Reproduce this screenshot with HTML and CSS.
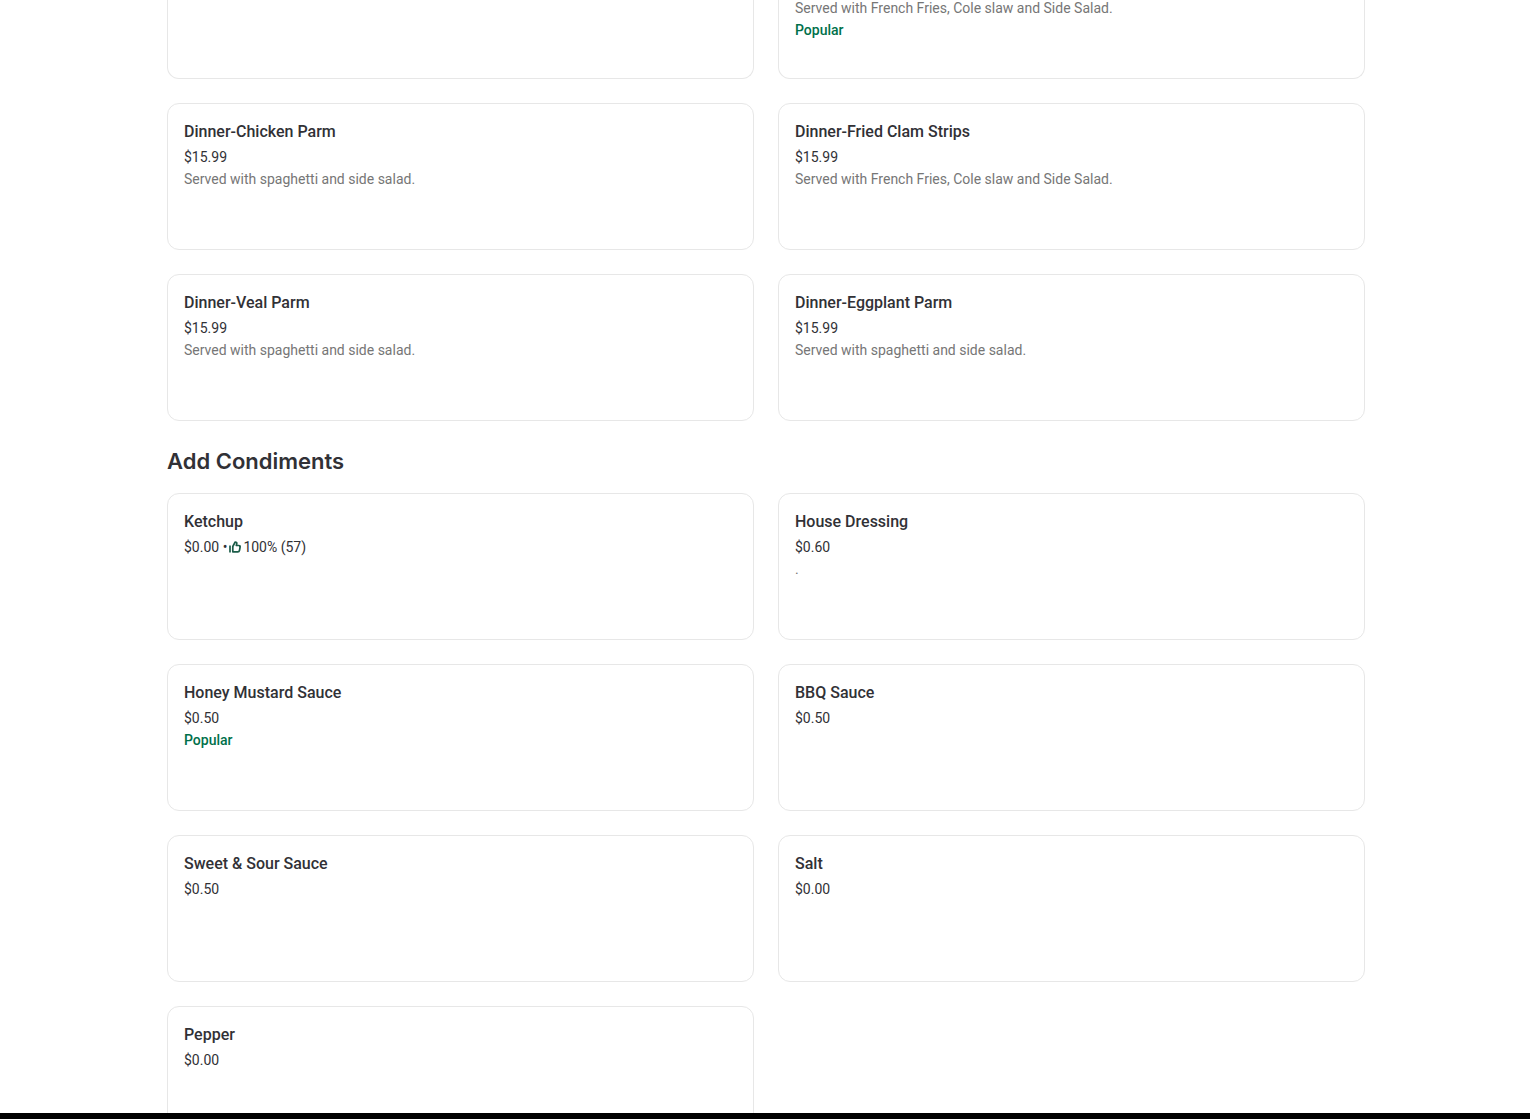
FILE: index.html
```html
<!DOCTYPE html>
<html lang="en">
<head>
<meta charset="utf-8">
<title>Menu</title>
<link rel="stylesheet" href="styles.css">
</head>
<body>
<main class="menu">
  <section class="items">
    <article class="card card-cut"></article>
    <article class="card card-cut">
      <p class="description">Served with French Fries, Cole slaw and Side Salad.</p>
      <p class="popular">Popular</p>
    </article>
    <article class="card">
      <h3 class="name">Dinner-Chicken Parm</h3>
      <p class="price">$15.99</p>
      <p class="description">Served with spaghetti and side salad.</p>
    </article>
    <article class="card">
      <h3 class="name">Dinner-Fried Clam Strips</h3>
      <p class="price">$15.99</p>
      <p class="description">Served with French Fries, Cole slaw and Side Salad.</p>
    </article>
    <article class="card">
      <h3 class="name">Dinner-Veal Parm</h3>
      <p class="price">$15.99</p>
      <p class="description">Served with spaghetti and side salad.</p>
    </article>
    <article class="card">
      <h3 class="name">Dinner-Eggplant Parm</h3>
      <p class="price">$15.99</p>
      <p class="description">Served with spaghetti and side salad.</p>
    </article>
  </section>
  <h2 class="heading">Add Condiments</h2>
  <section class="items">
    <article class="card">
      <h3 class="name">Ketchup</h3>
      <p class="price rated"><span>$0.00 •</span><svg class="thumb" viewBox="0 0 12 12" aria-hidden="true"><path d="M1 4.500V11.500M3.800 10.800V5.500L6.200 1C7.500 1 8 1.900 7.700 3L7.300 4.500H9.800Q11.300 4.500 11.100 6L10.500 9.300Q10.200 10.800 8.800 10.800Z"/></svg><span>100% (57)</span></p>
    </article>
    <article class="card">
      <h3 class="name">House Dressing</h3>
      <p class="price">$0.60</p>
      <p class="description">.</p>
    </article>
    <article class="card">
      <h3 class="name">Honey Mustard Sauce</h3>
      <p class="price">$0.50</p>
      <p class="popular">Popular</p>
    </article>
    <article class="card">
      <h3 class="name">BBQ Sauce</h3>
      <p class="price">$0.50</p>
    </article>
    <article class="card">
      <h3 class="name">Sweet &amp; Sour Sauce</h3>
      <p class="price">$0.50</p>
    </article>
    <article class="card">
      <h3 class="name">Salt</h3>
      <p class="price">$0.00</p>
    </article>
    <article class="card">
      <h3 class="name">Pepper</h3>
      <p class="price">$0.00</p>
    </article>
  </section>
</main>
<footer class="bar"></footer>
</body>
</html>
```
FILE: styles.css
```css
* {
  box-sizing: border-box;
}

body {
  display: flex;
  flex-direction: column;
  height: 100vh;
  margin: 0;
  overflow: hidden;
  background: #fff;
  color: #313136;
  font-family: Roboto, "Liberation Sans", sans-serif;
}

.menu {
  flex: 1;
  min-height: 0;
  padding: 0 165px 0 167px;
  overflow: hidden;
}

.items {
  display: grid;
  grid-template-columns: 1fr 1fr;
  gap: 24px;
}

.card {
  min-height: 147px;
  padding: 16px;
  border: 1px solid #e7e7e7;
  border-radius: 12px;
}

/* The first row continues from above the top edge. */
.card-cut {
  min-height: 82px;
  margin-top: -3px;
  padding-top: 0;
  border-top: 0;
  border-radius: 0 0 12px 12px;
}

.heading {
  margin: 24px 0 16px;
  font-family: Inter, sans-serif;
  font-size: 22px;
  font-weight: 600;
  line-height: 32px;
}

.name {
  margin: 0 0 2px;
  font-size: 16px;
  font-weight: 500;
  line-height: 24px;
}

.price,
.description,
.popular {
  margin: 0;
  font-size: 14px;
  line-height: 22px;
}

.description {
  color: #767676;
}

.popular {
  color: #00704a;
  font-weight: 500;
}

.rated {
  display: flex;
  align-items: center;
  gap: 2px;
}

.thumb {
  width: 12px;
  height: 12px;
  fill: none;
  stroke: #1b5c48;
  stroke-width: 1.7;
  stroke-linejoin: round;
}

.bar {
  flex: none;
  height: 6px;
  background: #000;
}
```
